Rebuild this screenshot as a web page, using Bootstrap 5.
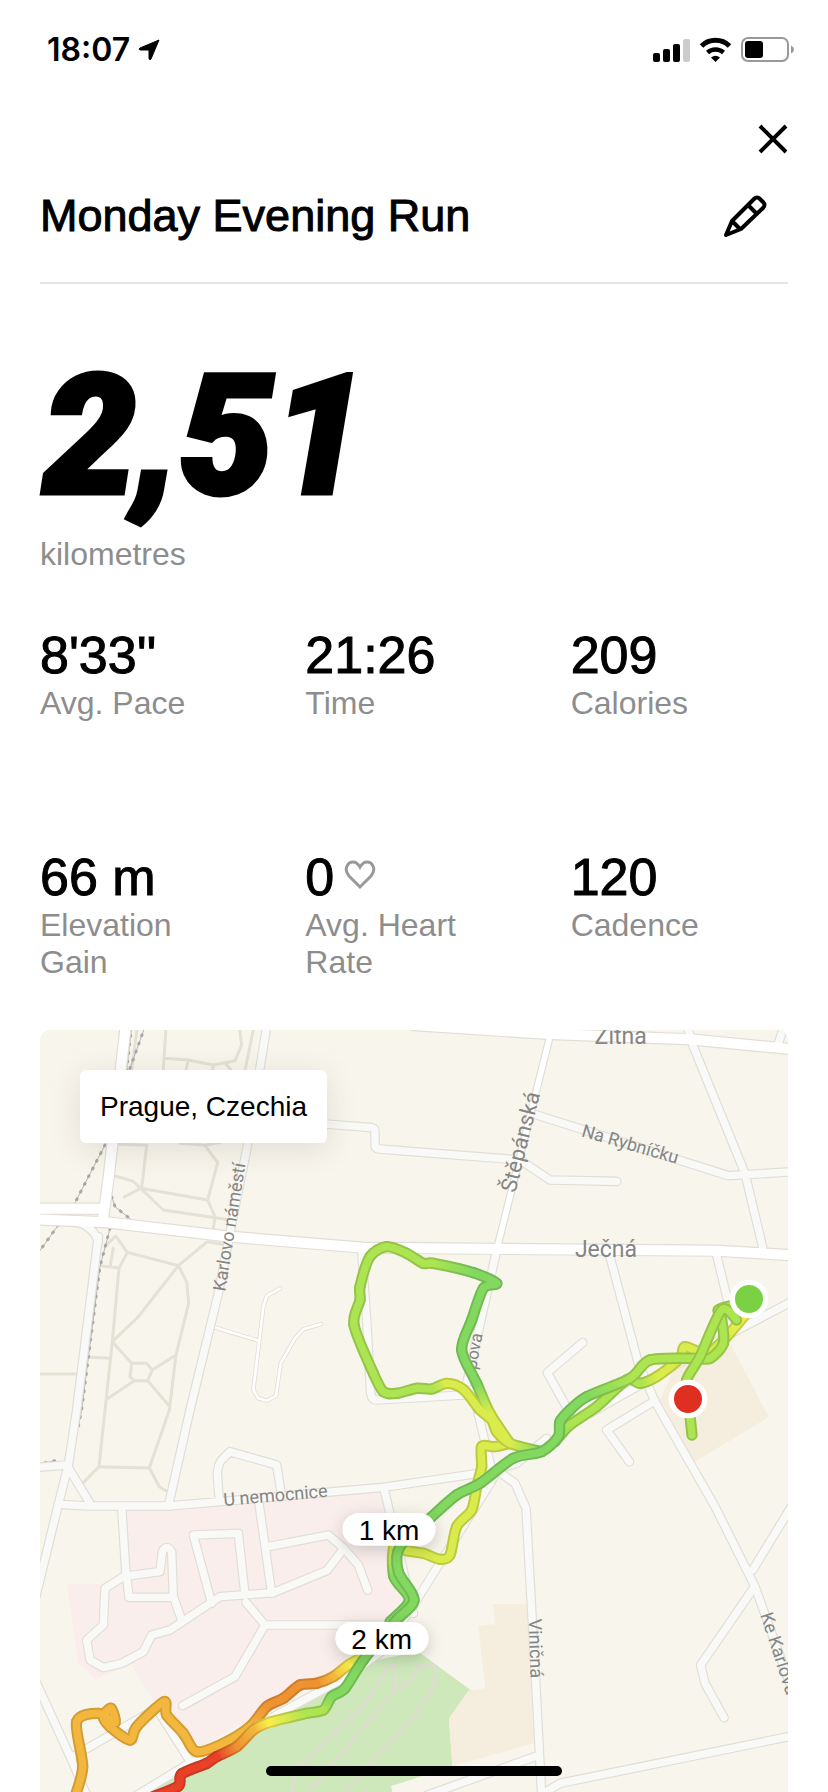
<!DOCTYPE html>
<html lang="en">
<head>
<meta charset="utf-8">
<meta name="viewport" content="width=device-width, initial-scale=1">
<title>Monday Evening Run</title>
<link href="https://cdn.jsdelivr.net/npm/bootstrap@5.3.0/dist/css/bootstrap.min.css" rel="stylesheet">
<style>
  body { font-family: "Liberation Sans", Arial, sans-serif; color: #000; background: #fff; }
  .page-pad { padding-left: 40px; padding-right: 40px; }
  .status-bar { height: 100px; padding: 0 33px 0 47px; }
  .clock { font: 600 32px/40px Inter, sans-serif; }
  .close-row { height: 78px; }
  .icon-btn { border: 0; padding: 0; background: none; line-height: 0; color: #000; }
  .run-head { border-bottom: 2px solid #e5e5e5; padding-bottom: 28px; }
  .run-title { font-size: 45px; line-height: 76px; margin: 0; font-weight: 400; -webkit-text-stroke: 1px #000; }
  .edit-btn { margin-right: 21px; }
  .distance { height: 252px; padding: 68px 0 0 3px; }
  .distance-num { font: italic 900 166px/170px Roboto, sans-serif; -webkit-text-stroke: 5px #000; }
  .unit, .stat-label { font-size: 32px; line-height: 37px; color: #8d8d8d; }
  .stats-wrap { padding-top: 52px; }
  .stats { --bs-gutter-x: 48px; --bs-gutter-y: 125px; margin-bottom: 49px; }
  .stat-value { font-size: 52px; line-height: 60px; -webkit-text-stroke: 1px #000; }
  .run-map { min-height: 480px; overflow: hidden; border-radius: 10px 10px 0 0; background: #f8f5ec; }
  .map-art { position: absolute; inset: 0; width: 100%; height: 100%; }
  .place { top: 40px; left: 40px; padding: 16px 20px; border-radius: 6px; background: #fff; font-size: 28px; line-height: 41px; box-shadow: 0 6px 32px rgba(60, 50, 30, .12); }
  .home-bar { width: 296px; height: 10px; bottom: 16px; border-radius: 5px; background: #000; }

  .map-art path { fill: none; stroke-linejoin: round; stroke-linecap: round; }
  .map-art .area-pink { fill: #f9eeec; }
  .map-art .area-green { fill: #cfe8bb; }
  .map-art .area-sand { fill: #f5eedf; }
  .park { stroke: #e4e1d5; stroke-width: 9; }
  .lane { stroke: #dfdcd2; stroke-width: 8; }
  .rail { stroke: #b4b4b4; stroke-width: 3; }
  .rail-ties { stroke: #a8a8a8; stroke-width: 9; stroke-dasharray: 3 23; }
  .edge { stroke: #e0ded6; }
  .road { stroke: #f9f9f7; }
  .main-road { stroke: #fff; }
  .street { font-family: Roboto, sans-serif; fill: #858583; }
  .km { font-size: 84px; fill: #000; }
</style>
</head>
<body>
<div class="d-flex flex-column min-vh-100">
  <div class="status-bar d-flex align-items-center justify-content-between">
    <div class="d-flex align-items-center gap-2">
      <span class="clock">18:07</span>
      <svg width="22" height="22" viewBox="0 0 22 22" aria-hidden="true"><path d="M21 1 13 20q-1 2-2-.5V11H2.500Q0 10.500 2 9Z" stroke="#000" stroke-linejoin="round"/></svg>
    </div>
    <svg width="142" height="28" viewBox="0 0 142 28" aria-label="Signal, Wi-Fi and battery">
      <g><rect x="0" y="17" width="7" height="9" rx="2"/><rect x="10" y="13" width="7" height="13" rx="2"/><rect x="20" y="8" width="7" height="18" rx="2"/><rect x="30" y="3" width="7" height="23" rx="2" fill="#ccc"/></g>
      <g fill="none" stroke="#000" stroke-width="5"><path d="M48.500 10a20 20 0 0 1 28 0"/><path d="M54.500 16.500a12 12 0 0 1 16 0" stroke-width="4.500"/></g>
      <path d="M58 21.500q4.500-3.500 9 0L62.500 26Z"/>
      <rect x="89" y="2" width="46" height="23" rx="6" fill="none" stroke="#999" stroke-width="2"/>
      <rect x="92" y="5" width="18" height="17" rx="3"/><path d="M138 9.500q3 1.500 3 4t-3 4Z" fill="#999"/>
    </svg>
  </div>

  <header class="page-pad">
    <div class="close-row d-flex align-items-center justify-content-end">
      <button class="icon-btn" type="button" aria-label="Close"><svg width="30" height="30" viewBox="0 0 30 30"><path d="m2 2 26 26M28 2 2 28" stroke="#000" stroke-width="4"/></svg></button>
    </div>
    <div class="run-head d-flex align-items-center justify-content-between">
      <h1 class="run-title">Monday Evening Run</h1>
      <button class="icon-btn edit-btn" type="button" aria-label="Edit title">
        <svg width="44" height="44" viewBox="0 0 44 44" fill="none" stroke="#000" stroke-width="4" stroke-linejoin="round"><path d="M3 41 9 27 31 5q3-3 6 0l3 3q3 3 0 6L18 35ZM25 11l9 9M9 27l8 8"/></svg>
      </button>
    </div>
  </header>

  <main class="page-pad d-flex flex-column flex-grow-1">
    <div class="distance"><div class="distance-num">2,51</div></div>
    <div class="unit">kilometres</div>

    <div class="stats-wrap">
      <div class="row stats">
        <div class="col-4"><div class="stat-value">8'33''</div><div class="stat-label">Avg. Pace</div></div>
        <div class="col-4"><div class="stat-value">21:26</div><div class="stat-label">Time</div></div>
        <div class="col-4"><div class="stat-value">209</div><div class="stat-label">Calories</div></div>
        <div class="col-4"><div class="stat-value">66 m</div><div class="stat-label pe-4">Elevation Gain</div></div>
        <div class="col-4">
          <div class="stat-value d-flex align-items-center gap-2">0
            <svg width="34" height="34" viewBox="-2 0 34 34" fill="none" stroke="#999" stroke-width="3" aria-hidden="true"><path d="M16 27 5 16C-1 9 4 2 9 2q4 0 7 5 3-5 7-5c5 0 10 7 4 14Z"/></svg>
          </div>
          <div class="stat-label pe-4">Avg. Heart Rate</div>
        </div>
        <div class="col-4"><div class="stat-value">120</div><div class="stat-label">Cadence</div></div>
      </div>
    </div>

    <section class="run-map position-relative flex-grow-1" aria-label="Route map">
      <svg class="map-art" viewBox="0 0 2244 2286" preserveAspectRatio="xMidYMin slice">
        <defs>
          <g id="streets">
            <g transform="translate(-30 -30)"><path d="M710 20 650 390 615 560 565 820 480 1170 415 1458M885 312 1025 323Q1035 325 1035 335V375Q1035 386 1048 387L1110 392 1470 420 1560 480 1760 484M205 650 140 1170 115 1335 85 1453 15 1740M120 600Q190 615 205 665M995 690 1010 900 1022 1120Q1025 1140 1040 1140L1300 1125"/></g>
            <g transform="translate(1080 -30)"><path d="M410 285 985 467 1180 455M862 20 880 80 1035 460 1090 690M1155 10 1135 70M950 705 985 850M1180 842 985 945 570 1180M630 710 715 1030 765 1145 945 1460 1065 1700 1180 2020M548 968 442 1058 510 1180M765 1142 620 1230 688 1325M288 700 200 1090M225 1140 275 1350"/></g>
            <g transform="translate(-30 1110)"><path d="M20 202 110 195 180 310M85 313 180 318H415L570 305 1060 262 1380 215 1460 190 1550 115M568 305 562 220Q565 190 575 180L600 155 740 195 752 270M275 320 288 525 225 565 220 675 170 720 180 780 220 803 275 790 340 755 365 705 420 690 570 590 730 578 890 512 942 445 985 495 1013 570M942 445 895 405 715 440M687 310 725 580M290 528 390 515 397 455Q410 430 425 455L430 590 455 660M290 530 297 592H430M545 610 490 405 625 400 645 585M648 607 705 675H1080M705 675 615 830 458 917M1062 265 1150 640M20 850 125 1080 170 1186M125 1072 380 925 490 1100M320 1186 470 1095 730 950 950 830 1060 750 1160 600 1390 235"/></g>
            <g transform="translate(1080 1110)"><path d="M290 210 345 250 378 325 410 900 425 1186M1180 310 1058 510M1060 565 902 795 915 850 972 953M1180 1007 480 1150 420 1186M410 1068 80 1186"/></g>
          </g>
          <g id="avenues">
            <g transform="translate(-30 -30)"><path d="M288 10 235 480 220 590M10 566H220M10 598 230 607 600 650 1000 683 2060 692 2290 706M1150 15 1560 42 1980 58 2290 88"/></g>
          </g>
          <g id="branch"><path d="M1527 30 1370 660"/></g>
          <g id="drive" transform="translate(-30 -30)"><path d="M553 922 685 962M750 805 710 828 700 860 670 1110 685 1135 710 1142 738 1128 752 1030 795 955 820 928 873 912"/></g>
          <g id="rails" transform="translate(-30 -30)"><path d="M345 20 298 150M305 20 290 150M225 375 135 548M85 615 20 705M245 530 255 560 302 598M240 625 210 740 155 1170 145 1220M20 1334 75 1322"/></g>
        </defs>

        <path class="area-pink" d="M260 1440 1025 1380 1050 1455 1120 1710 1060 1790 960 1890 480 2150 335 2005 275 1905 165 1948 115 1900 80 1662H260Z"/>
        <path class="area-green" d="M960 1900 1135 1865 1295 1982 1227 2065 1237 2208 1080 2260 1053 2268 1060 2300H300L670 2080Z"/>
        <path class="area-sand" d="M1360 1722H1460L1482 2140 1237 2208 1227 2065 1285 1982 1336 1975 1315 1788 1365 1782Z"/>
        <path class="area-sand" d="M2065 930 2175 1140 2188 1160 1965 1295 1860 1110 1910 1000Z"/>

        <g class="park">
          <g transform="translate(-30 -30)"><path d="M408 20 400 150M405 115 475 120 550 135 615 122 635 75 628 20M475 120 468 150M550 135 547 150M587 130 603 150M672 20 645 150M322 20 305 150M260 372 350 376 335 505M450 370 525 376 575 366M525 376 563 428 533 540 555 590 550 625M250 467 308 483 332 505 533 540M283 531 332 505 400 570 600 600M225 680 257 648 292 697 445 737 532 665 590 675M445 737 470 785 476 850 438 1005 418 1170 358 1344 388 1400 412 1415M445 737 325 890 247 965 305 1030H350L367 1050 353 1082H313L300 1070 305 1030M367 1050 438 1005M353 1082 420 1160M313 1082 230 1138M292 697 267 745 247 965 225 1170 207 1340 160 1388M207 1340 358 1344M250 685 240 740M215 738 267 743M180 1012 240 1015M20 1062H140"/></g>
        </g>
        <g class="lane" transform="translate(-30 1110)"><path d="M1095 870V795H1080L1000 920 810 1095M800 1120 785 1180M1220 798 1167 795 1145 840 1095 870 835 1180M1220 798 1208 865 1155 945 940 1180"/></g>
        <use href="#rails" class="rail"/><use href="#rails" class="rail-ties"/>
        <use href="#drive" class="edge" stroke-width="13"/><use href="#drive" class="main-road" stroke-width="8"/>
        <use href="#streets" class="edge" stroke-width="29"/>
        <use href="#avenues" class="edge" stroke-width="37"/>
        <use href="#branch" class="edge" stroke-width="24"/>
        <use href="#streets" class="road" stroke-width="22"/>
        <use href="#branch" class="main-road" stroke-width="17"/>
        <use href="#avenues" class="main-road" stroke-width="30"/>

        <g class="street" text-anchor="middle">
          <text x="1742" y="42" font-size="69">Žitná</text>
          <text x="1698" y="682" font-size="69">Ječná</text>
          <text transform="translate(1463 341) rotate(-76)" font-size="66">Štěpánská</text>
          <text transform="translate(1766 360) rotate(16)" font-size="54">Na Rybníčku</text>
          <text transform="translate(586 594) rotate(-81)" font-size="54">Karlovo náměstí</text>
          <text transform="translate(1318 966) rotate(-80)" font-size="51">pova</text>
          <text transform="translate(708 1414) rotate(-5)" font-size="54">U nemocnice</text>
          <text transform="translate(1469 1856) rotate(88)" font-size="54">Viničná</text>
          <text transform="translate(2200 1876) rotate(72)" font-size="54">Ke Karlovu</text>
        </g>

        <g id="route"></g>

        <g stroke="#fff" stroke-width="16">
          <circle cx="2127" cy="807" r="50" fill="#7ad143"/>
          <circle cx="1944" cy="1107" r="50" fill="#df2f20"/>
        </g>
        <g style="filter:drop-shadow(0 12px 24px rgba(0,0,0,.18))">
          <rect x="907" y="1449" width="280" height="98" rx="49" fill="#fff"/>
          <rect x="886" y="1776" width="280" height="98" rx="49" fill="#fff"/>
        </g>
        <g class="km" text-anchor="middle"><text x="1047" y="1529">1 km</text><text x="1025" y="1856">2 km</text></g>
      </svg>
      <div class="place position-absolute">Prague, Czechia</div>
    </section>
  </main>
</div>
<div class="home-bar position-fixed start-50 translate-middle-x"></div>

<script>
  // Tracks are lists of [x, y, pace colour]; a missing colour repeats the previous one.
  const G = [131, 216, 96], L = [172, 228, 82], Y = [217, 236, 76], O = [244, 183, 61], D = [238, 146, 50], R = [233, 65, 40], W = [250, 238, 75];
  const tracks = [
    [[970,1880,Y],[925,1905,W],[880,1940,O],[830,1960,D],[780,1965],[730,2005],[680,2030],[630,2090,O],[550,2140],[470,2165],[430,2110],[380,2055],[372,2015],[290,2090],[270,2130],[210,2090],[190,2060],[213,2035],[225,2078],[175,2050],[110,2075],[128,2210],[105,2300]],
    [[1410,1240,Y],[1365,1250],[1325,1250],[1325,1310],[1310,1370],[1295,1440],[1250,1490],[1230,1575],[1200,1588],[1150,1570],[1100,1562],[1062,1550],[1062,1640,G],[1108,1710],[1050,1775]],
    [[1410,1240,Y],[1350,1150],[1310,1060,G],[1265,960],[1295,870],[1330,775],[1370,760],[1300,728],[1180,700,L],[1150,700],[1100,670],[1040,650],[990,680],[960,770],[960,810],[942,885],[1000,1030],[1030,1085],[1070,1090],[1130,1075],[1175,1077],[1220,1060,Y],[1270,1078],[1320,1140],[1355,1170],[1370,1205],[1410,1240],[1505,1265,G]],
    [[2127,840,W],[2060,920,Y],[2000,970],[1935,950],[1920,985],[1850,1040],[1800,1060,L],[1760,1050],[1670,1130],[1590,1185],[1545,1235,G]],
    [[2127,807,L],[2080,825],[2035,840],[2045,870],[2050,940],[2010,985],[1960,985],[1830,990],[1770,1045],[1640,1100,G],[1590,1140],[1560,1175],[1555,1220],[1505,1265],[1420,1285],[1320,1360],[1250,1395],[1170,1465],[1080,1550],[1075,1625],[1122,1710],[1065,1775],[970,1890],[915,1975],[875,2000],[850,2040,L],[800,2050],[685,2078,W],[640,2100,O],[590,2150,D],[530,2180,R],[500,2200],[425,2232],[415,2268],[340,2300]],
    [[2090,870,L],[2045,840],[1980,980],[1940,1050],[1945,1110],[1956,1215]]
  ];
  const NS = 'http://www.w3.org/2000/svg', layer = document.getElementById('route');
  const make = (tag, attrs, parent) => { const e = document.createElementNS(NS, tag); for (const k in attrs) e.setAttribute(k, attrs[k]); parent.appendChild(e); return e; };
  const css = (c, k) => `rgb(${c.map(v => Math.round(v * k))})`;
  tracks.forEach((t, n) => {
    for (let i = 1; i < t.length; i++) t[i][2] = t[i][2] || t[i - 1][2];
    [[34, .86], [22, 1]].forEach(([width, shade], pass) => {
      for (let i = 0; i < t.length - 1; i++) {
        const a = t[i], b = t[i + 1], p = t[i - 1] || a, q = t[i + 2] || b, id = `g${n}-${pass}-${i}`;
        const g = make('linearGradient', { id, gradientUnits: 'userSpaceOnUse', x1: a[0], y1: a[1], x2: b[0], y2: b[1] }, layer);
        make('stop', { offset: 0, 'stop-color': css(a[2], shade) }, g);
        make('stop', { offset: 1, 'stop-color': css(b[2], shade) }, g);
        const c = [a[0] + (b[0] - p[0]) / 7, a[1] + (b[1] - p[1]) / 7, b[0] - (q[0] - a[0]) / 7, b[1] - (q[1] - a[1]) / 7];
        make('path', { d: `M${a[0]} ${a[1]}C${c} ${b[0]} ${b[1]}`, stroke: `url(#${id})`, 'stroke-width': width }, layer);
      }
    });
  });
</script>
<script src="https://cdn.jsdelivr.net/npm/bootstrap@5.3.0/dist/js/bootstrap.bundle.min.js"></script>
</body>
</html>
